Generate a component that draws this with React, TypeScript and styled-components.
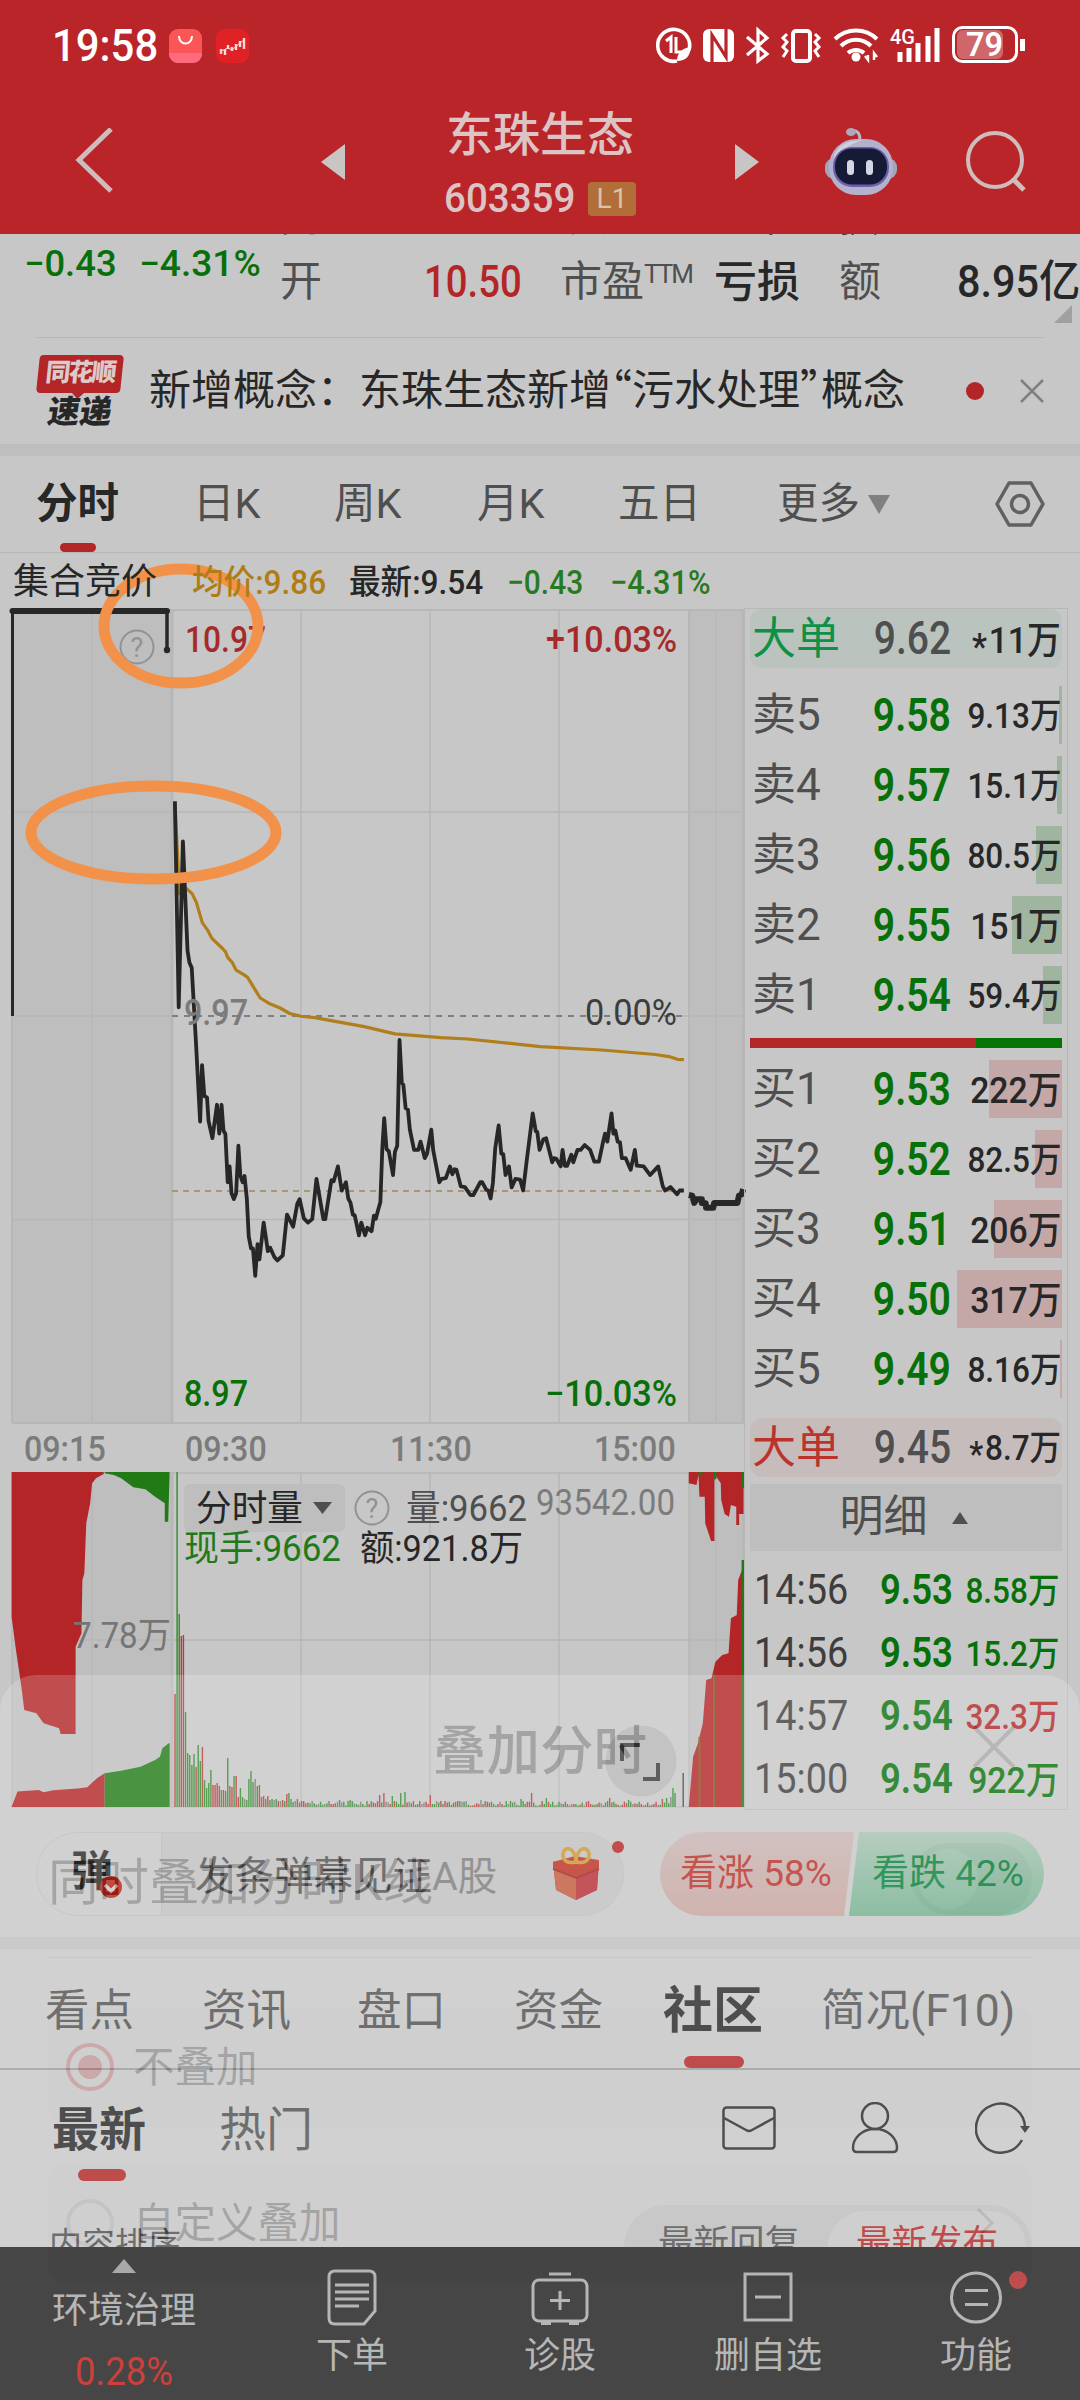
import React from "react";
import styled, { createGlobalStyle } from "styled-components";

const FONT = `Roboto, "Noto Sans CJK SC", sans-serif`;
const INK = "#272727";
const GRAY = "#4f4f4f";
const MUTE = "#7b7b7b";
const RED = "#b32526";
const GREEN = "#087008";
const LINE = "#b7b7b7";

const Global = createGlobalStyle`
  body { margin: 0; background: #c7c7c7; font-family: ${FONT}; color: ${INK}; }
  * { box-sizing: border-box; }
  svg { display: block; }
`;

const Screen = styled.div`
  position: relative;
  width: 1080px;
  height: 2400px;
  overflow: hidden;
  background: #c7c7c7;
  display: flex;
  flex-direction: column;
  white-space: nowrap;
`;

/* A run of text squeezed horizontally, for the narrow numerals of the app */
const Txt = styled.span<{ $s: number; $c?: string; $w?: number; $k?: number; $o?: string }>`
  display: inline-block;
  font-size: ${(p) => p.$s}px;
  line-height: 1.2;
  color: ${(p) => p.$c || "inherit"};
  font-weight: ${(p) => p.$w || 400};
  transform: scaleX(${(p) => p.$k || 1});
  transform-origin: ${(p) => p.$o || "left"} center;
`;

/* ---------- header ---------- */
const Header = styled.header`
  height: 234px;
  flex: none;
  background: #ba252a;
  color: #fff;
`;
const StatusBar = styled.div`
  height: 90px;
  padding: 2px 53px 0 52px;
  display: flex;
  align-items: center;
  justify-content: space-between;
`;
const StatusLeft = styled.div`
  display: flex;
  align-items: center;
  gap: 14px;
`;
const Clock = styled.div`
  width: 103px;
`;
const TitleBar = styled.div`
  height: 144px;
  display: grid;
  grid-template-columns: 310px 460px 310px;
  align-items: center;
`;
const TitleSide = styled.div<{ $pad: string; $gap?: number }>`
  display: flex;
  align-items: center;
  gap: ${(p) => p.$gap || 0}px;
  padding: ${(p) => p.$pad};
`;
const TitleMid = styled.div`
  display: flex;
  align-items: center;
  justify-content: space-between;
  padding: 0 11px;
`;
const TitleText = styled.div`
  display: flex;
  flex-direction: column;
  align-items: center;
  color: #dcc4c5;
  gap: 17px;
  margin-top: 3px;
`;
const Name = styled.div`
  font-size: 47px;
  font-weight: 500;
  line-height: 54px;
`;
const CodeLine = styled.div`
  display: flex;
  align-items: center;
  height: 40px;
  width: 192px;
  justify-content: space-between;
`;
const CodeNum = styled.div`
  width: 138px;
`;
const Level = styled.div`
  width: 48px;
  height: 34px;
  border-radius: 4px;
  background: #b26e38;
  color: #d9c3ab;
  font-size: 28px;
  line-height: 34px;
  text-align: center;
`;

/* ---------- quote strip ---------- */
const Quote = styled.section`
  height: 103px;
  flex: none;
  position: relative;
  overflow: hidden;
`;
const QuoteGrid = styled.div`
  display: grid;
  grid-template-columns: 254px 144px 136px 154px 125px 118px auto;
  padding-left: 26px;
  height: 97px;
  align-items: center;
`;
const PrevRow = styled(QuoteGrid)`
  position: absolute;
  left: 0;
  top: -38px;
  height: 44px;
  font-size: 40px;
  line-height: 44px;
`;
const PrevValue = styled.span`
  padding-left: 48px;
`;
const Cell = styled.div<{ $up?: number }>`
  display: flex;
  gap: 23px;
  margin-left: -2px;
  margin-top: ${(p) => -(p.$up || 0)}px;
`;
const Sup = styled.sup`
  font-size: 26px;
  vertical-align: 13px;
  line-height: 0;
  letter-spacing: -2px;
`;
const Corner = styled.div`
  position: absolute;
  right: 8px;
  bottom: 14px;
  border-left: 18px solid transparent;
  border-bottom: 18px solid #a0a0a0;
`;

/* ---------- news ---------- */
const News = styled.section`
  margin: 0 36px;
  height: 107px;
  flex: none;
  border-top: 1px solid ${LINE};
  display: flex;
  align-items: center;
`;
const Brand = styled.div`
  width: 88px;
  margin-right: 25px;
  display: flex;
  flex-direction: column;
  align-items: center;
  gap: 3px;
`;
const BrandTop = styled.div`
  position: relative;
  width: 84px;
  height: 38px;
  background: ${RED};
  border-radius: 4px;
  transform: skewX(-6deg);
  color: #dcc9c9;
  font: 900 25px/36px ${FONT};
  text-align: center;
  letter-spacing: -2px;
  &::after {
    content: "";
    position: absolute;
    left: 36px;
    bottom: -6px;
    border: 6px solid transparent;
    border-bottom: 0;
    border-top-color: ${RED};
  }
`;
const BrandBottom = styled.div`
  font: 900 32px/32px ${FONT};
  transform: skewX(-9deg);
`;
const NewsText = styled.div`
  flex: 1;
  font-size: 42px;
  line-height: 50px;
  margin-top: -5px;
`;
const Q = styled.span`
  font-family: "Noto Sans CJK SC", sans-serif;
  font-feature-settings: "halt";
`;
const Dot = styled.div<{ $d: number }>`
  width: ${(p) => p.$d}px;
  height: ${(p) => p.$d}px;
  border-radius: 50%;
  background: ${RED};
`;
const CloseIcon = styled.svg`
  margin-left: 36px;
`;
const Band = styled.div`
  height: 12px;
  flex: none;
  background: #bebebe;
`;

/* ---------- tabs ---------- */
const Tabs = styled.nav`
  height: 97px;
  flex: none;
  border-bottom: 1px solid ${LINE};
  display: grid;
  grid-template-columns: 157px 141px 143px 141px 159px 217px 1fr;
  padding-left: 36px;
  color: ${GRAY};
  font-size: 41.5px;
`;
const Tab = styled.div<{ $on?: boolean }>`
  position: relative;
  height: 96px;
  line-height: 98px;
  color: ${(p) => (p.$on ? INK : GRAY)};
  font-weight: ${(p) => (p.$on ? 700 : 400)};
  display: flex;
  align-items: center;
  gap: 8px;
`;
const Underline = styled.i<{ $l: number; $w: number; $b?: number; $h: number }>`
  position: absolute;
  left: ${(p) => p.$l}px;
  bottom: ${(p) => p.$b || 0}px;
  width: ${(p) => p.$w}px;
  height: ${(p) => p.$h}px;
  border-radius: 6px;
  background: ${RED};
`;
const Caret = styled.i<{ $w: number; $h: number; $c: string; $up?: boolean }>`
  border: ${(p) => p.$w / 2}px solid transparent;
  ${(p) => (p.$up ? "border-top: 0;" : "border-bottom: 0;")}
  ${(p) => (p.$up ? "border-bottom" : "border-top")}: ${(p) => p.$h}px solid ${(p) => p.$c};
`;

/* ---------- market area ---------- */
const Market = styled.section`
  flex: none;
  height: 1255px;
  display: grid;
  grid-template-columns: 744px 324px;
`;
const ChartCol = styled.div`
  display: flex;
  flex-direction: column;
`;
const Info = styled.div`
  height: 56px;
  padding: 3px 0 0 13px;
  display: grid;
  grid-template-columns: 179px 157px 158px 103px auto;
  align-items: center;
  font-weight: 500;
`;
const Axis = styled.div`
  height: 49px;
  padding: 5px 0 0 24px;
  display: grid;
  grid-template-columns: 161px 205px 204px auto;
  align-items: center;
`;
const Panel = styled.aside`
  margin-top: 55px;
  border: 1px solid ${LINE};
  padding: 0 5px;
  display: flex;
  flex-direction: column;
`;
const BookRow = styled.div<{ $h: number; $bg?: string; $mt?: number }>`
  position: relative;
  height: ${(p) => p.$h}px;
  margin-top: ${(p) => p.$mt || 0}px;
  background: ${(p) => p.$bg || "none"};
  border-radius: ${(p) => (p.$bg ? 12 : 0)}px;
  display: grid;
  grid-template-columns: 100px 99px 1fr;
  align-items: center;
  padding: 1px 1px 0 2px;
  flex: none;
`;
const DepthBar = styled.i<{ $w: number; $c: string }>`
  position: absolute;
  right: 0;
  top: 0;
  width: ${(p) => p.$w}px;
  height: 58px;
  background: ${(p) => p.$c};
`;
const Right = styled.div<{ $dy?: number }>`
  position: relative;
  display: flex;
  justify-content: flex-end;
  margin-top: ${(p) => p.$dy || 0}px;
`;
const Star = styled.span`
  font-size: 1em;
  position: relative;
  top: 0.18em;
  margin-right: 2px;
`;
const Ratio = styled.div`
  margin-top: 14px;
  height: 10px;
  flex: none;
  background: linear-gradient(90deg, ${RED} 0 226.5px, #047404 226.5px);
`;
const DetailHead = styled.div`
  margin: 7px 0 6px;
  height: 67px;
  flex: none;
  background: #bebebe;
  color: ${GRAY};
  display: flex;
  align-items: center;
  justify-content: center;
  gap: 24px;
  font-size: 44px;
  line-height: 67px;
  padding-right: 5px;
`;
const TradeRow = styled.div`
  height: 63px;
  flex: none;
  display: grid;
  grid-template-columns: 100px 99px 1fr;
  align-items: center;
  padding: 4px 3px 0 4px;
`;

/* ---------- bullet bar ---------- */
const Bullet = styled.section`
  flex: none;
  height: 129px;
  padding: 24px 36px 0;
  display: flex;
  gap: 36px;
`;
const Input = styled.div`
  position: relative;
  width: 588px;
  height: 84px;
  border: 1px solid #bbb;
  border-radius: 42px;
  background: linear-gradient(90deg, #c7c7c7 0 124px, #b8b8b8 124px 125px, #bfbfbf 125px);
  display: flex;
  align-items: center;
  padding-right: 22px;
`;
const BulletMark = styled.div`
  position: relative;
  width: 124px;
  padding-left: 34px;
  font-size: 42px;
  font-weight: 700;
  line-height: 76px;
  margin-top: -4px;
`;
const MarkBadge = styled.svg`
  position: absolute;
  left: 63px;
  top: 42px;
`;
const Placeholder = styled.div`
  flex: 1;
  padding-left: 34px;
  margin-top: -4px;
  font-size: 39.5px;
  color: ${MUTE};
`;
const Strong = styled.span`
  color: #505050;
`;
const GiftDot = styled.div`
  position: absolute;
  right: -1px;
  top: 8px;
`;
const Vote = styled.div`
  width: 384px;
  height: 84px;
  display: flex;
`;
const VoteHalf = styled.div<{ $g?: boolean }>`
  width: ${(p) => (p.$g ? 195 : 194)}px;
  margin-left: ${(p) => (p.$g ? -5 : 0)}px;
  flex: none;
  border-radius: ${(p) => (p.$g ? "0 42px 42px 0" : "42px 0 0 42px")};
  clip-path: ${(p) => (p.$g ? "polygon(10px 0,100% 0,100% 100%,0 100%)" : "polygon(0 0,100% 0,184px 100%,0 100%)")};
  background: ${(p) => (p.$g ? "linear-gradient(#a6c1b0,#71af8d)" : "linear-gradient(#c6b4b2,#c5a29c)")};
  color: ${(p) => (p.$g ? "#047f38" : "#b82d26")};
  font-size: 37px;
  line-height: 83px;
  padding-left: ${(p) => (p.$g ? 23 : 20)}px;
`;

/* ---------- community ---------- */
const SubTabs = styled.nav`
  flex: none;
  height: 121px;
  border-bottom: 2px solid #9b9b9b;
  padding-left: 45px;
  display: grid;
  grid-template-columns: 157px 155px 157px 149px 158px 1fr;
  color: ${GRAY};
  font-size: 44.5px;
`;
const SubTab = styled.div<{ $on?: boolean }>`
  position: relative;
  height: 119px;
  line-height: 124px;
  color: ${(p) => (p.$on ? INK : GRAY)};
  font-size: ${(p) => (p.$on ? 50 : 44.5)}px;
  font-weight: ${(p) => (p.$on ? 700 : 400)};
`;
const FeedHead = styled.div`
  flex: none;
  height: 116px;
  display: grid;
  grid-template-columns: 167px 503px 129px 124px auto;
  padding-left: 52px;
  align-items: center;
`;
const FeedTab = styled.div<{ $on?: boolean }>`
  position: relative;
  height: 116px;
  line-height: 119px;
  font-size: 47px;
  font-weight: ${(p) => (p.$on ? 700 : 400)};
  color: ${(p) => (p.$on ? INK : GRAY)};
`;
const SortRow = styled.div`
  flex: none;
  height: 61px;
  overflow: hidden;
  padding: 19px 48px 0 49px;
  display: flex;
  justify-content: space-between;
  font-size: 33px;
  color: ${GRAY};
`;
const SortLabel = styled.div`
  padding-top: 13px;
`;
const SortPill = styled.div`
  width: 408px;
  height: 84px;
  border-radius: 42px;
  background: #bebebe;
  padding: 6px;
  display: flex;
  font-size: 35.5px;
`;
const SortOpt = styled.div<{ $on?: boolean }>`
  width: 198px;
  line-height: 64px;
  height: 72px;
  text-align: center;
  border-radius: 36px;
  background: ${(p) => (p.$on ? "#c7c7c7" : "none")};
  color: ${(p) => (p.$on ? RED : GRAY)};
`;

/* ---------- bottom bar ---------- */
const Nav = styled.footer`
  flex: none;
  height: 153px;
  background: #1c1c1c;
  color: #a6a6a6;
  display: grid;
  grid-template-columns: 248px repeat(4, 208px);
  font-size: 36px;
`;
const NavItem = styled.div<{ $first?: boolean }>`
  position: relative;
  display: flex;
  flex-direction: column;
  align-items: center;
  padding-top: ${(p) => (p.$first ? 12 : 21)}px;
  line-height: 44px;
`;
const NavLabel = styled.div<{ $mt: number; $c?: string }>`
  margin-top: ${(p) => p.$mt}px;
  color: ${(p) => p.$c || "inherit"};
`;
const NavDot = styled.div`
  position: absolute;
  left: 137px;
  top: 24px;
`;

/* ---------- fading sheet ---------- */
const Sheet = styled.div`
  position: absolute;
  left: 0;
  right: 0;
  top: 1675px;
  bottom: 0;
  border-radius: 36px 36px 0 0;
  background: #fff;
  opacity: 0.19;
  color: #101010;
  display: flex;
  flex-direction: column;
  padding: 0 48px;
`;
const SheetHead = styled.div`
  position: relative;
  height: 140px;
  padding-top: 2px;
  display: flex;
  justify-content: center;
  align-items: center;
  font-size: 53.5px;
  font-weight: 500;
`;
const SheetClose = styled.div`
  position: absolute;
  right: 16px;
  top: 51px;
`;
const SwitchRow = styled.div`
  height: 143px;
  border-bottom: 1px solid #ccc;
  padding-bottom: 16px;
  display: flex;
  align-items: center;
  justify-content: space-between;
  font-size: 50.5px;
`;
const Switch = styled.div`
  width: 120px;
  height: 72px;
  margin-top: 2px;
  border-radius: 36px;
  background: #dcdcdc;
  padding: 6px;
`;
const Knob = styled.div`
  width: 60px;
  height: 60px;
  border-radius: 50%;
  background: #fff;
`;
const Option = styled.div<{ $mt: number }>`
  margin-top: ${(p) => p.$mt}px;
  height: 120px;
  border-radius: 18px;
  background: #f5f5f5;
  padding: 0 38px 0 18px;
  display: flex;
  align-items: center;
  gap: 19px;
  font-size: 41.5px;
`;
const OptionText = styled.div`
  flex: 1;
  margin-top: -6px;
`;
const Radio = styled.div<{ $on?: boolean }>`
  width: 48px;
  height: 48px;
  border-radius: 50%;
  border: 4px solid ${(p) => (p.$on ? "#e0262b" : "#bbb")};
  display: grid;
  place-items: center;
  &::after {
    content: "";
    width: 24px;
    height: 24px;
    border-radius: 50%;
    background: ${(p) => (p.$on ? "#e0262b" : "transparent")};
  }
`;

/* ---------- chart data ---------- */
const PRICE =
  "65,62 75,660 86,178 98,495 103,530 109,545 120,760 131,992 136,828 142,918 149,922 153,990 163,1040 175,943 181,1027 187,943 192,1018 197,1028 203,1168 208,1122 213,1200 219,1217 225,1200 231,1062 236,1148 242,1168 247,1150 253,1215 258,1325 264,1360 269,1360 275,1440 281,1348 286,1392 297,1285 308,1368 314,1358 325,1385 333,1395 347,1380 358,1262 374,1297 385,1230 391,1217 402,1273 413,1285 424,1275 435,1158 453,1275 458,1275 474,1162 480,1165 491,1122 501,1192 512,1168 518,1215 524,1228 530,1262 535,1264 546,1322 552,1285 562,1322 568,1300 579,1310 585,1265 590,1274 597,1245 602,1225 607,1070 612,982 618,1072 624,1078 635,1147 640,1080 646,1062 652,755 658,880 662,885 668,953 674,957 679,1015 690,1074 701,1074 707,1050 718,1098 724,1085 735,1015 740,1075 756,1168 762,1158 773,1156 784,1122 790,1145 796,1130 801,1132 812,1180 823,1182 837,1205 845,1205 863,1168 868,1168 879,1190 884,1192 890,1215 896,1170 902,1070 911,1003 918,1085 923,1086 929,1147 938,1122 945,1183 955,1158 967,1160 975,1192 985,1100 1000,968 1008,1020 1012,1022 1018,1074 1028,1043 1035,1040 1051,1110 1056,1098 1062,1100 1073,1122 1078,1074 1084,1120 1090,1120 1101,1088 1106,1110 1117,1074 1125,1074 1136,1060 1150,1074 1161,1108 1173,1108 1184,1050 1189,1027 1195,1050 1206,968 1211,1027 1216,1018 1222,1050 1228,1052 1233,1098 1243,1098 1256,1132 1267,1074 1272,1120 1290,1122 1307,1147 1328,1122 1340,1180 1346,1192 1360,1182 1377,1203 1384,1192 1395,1192";
const AVERAGE =
  "65,62 72,220 77,330 95,315 110,330 121,355 137,415 150,435 162,460 190,490 197,498 203,515 215,530 225,552 245,565 255,573 288,633 310,648 340,662 365,678 395,686 430,690 560,716 640,737 760,748 830,752 1020,774 1180,784 1320,797 1360,804 1378,811 1395,812";
const CLOSE_AUCTION =
  "1408,1205 1417,1207 1422,1228 1428,1217 1442,1217 1442,1228 1452,1229 1453,1242 1472,1242 1474,1228 1535,1228 1539,1207 1546,1203 1550,1188";

/* [height in px, colour] for the opening minutes */
const OPENING: [number, string][] = [
  [113, "r"], [335, "g"], [193, "g"], [171, "r"], [172, "r"], [95, "g"], [54, "g"], [52, "g"], [42, "g"], [53, "g"],
  [40, "r"], [62, "g"], [46, "g"], [60, "r"], [27, "g"], [19, "g"], [24, "g"], [37, "g"], [22, "r"], [22, "r"],
  [24, "r"], [21, "r"], [17, "g"], [17, "r"], [16, "g"], [49, "g"], [21, "r"], [20, "r"], [31, "g"], [31, "r"],
  [10, "r"], [19, "g"], [10, "g"], [8, "k"], [7, "g"], [28, "g"], [36, "g"], [25, "g"], [28, "k"], [21, "g"],
  [22, "r"], [10, "r"], [11, "r"], [8, "g"], [11, "r"], [7, "g"], [8, "g"], [7, "k"], [8, "g"], [6, "r"],
  [6, "k"], [7, "r"], [6, "g"], [13, "r"], [14, "g"], [8, "g"], [5, "g"], [6, "k"], [8, "r"],
];
const PEAKS: Record<number, [number, string]> = {
  78: [7, "g"], 83: [7, "g"], 97: [12, "r"], 99: [14, "r"], 103: [11, "g"], 107: [14, "g"], 109: [15, "g"],
  121: [12, "r"], 145: [7, "k"], 164: [8, "g"], 169: [14, "r"], 176: [9, "g"], 206: [9, "r"], 215: [7, "g"],
  231: [8, "r"], 233: [9, "g"], 235: [10, "k"], 236: [19, "g"], 237: [14, "g"],
};
const TONE: Record<string, string> = { r: "#b5383a", g: "#2f8a2a", k: "#777" };
const BARS = Array.from({ length: 238 }, (_, i): [number, string] => {
  if (i < OPENING.length) return OPENING[i];
  if (PEAKS[i]) return PEAKS[i];
  const n = (i * 7919 + ((i * i) % 31) * 37) % 101;
  return [1.5 + (n % 7) * 0.75, n % 5 < 2 ? "g" : n % 5 < 4 ? "r" : "k"];
});

type LabelProps = { x: number; y: number; w: number; c: string; s?: number; b?: number; children: React.ReactNode };
const Label = ({ x, y, w, c, s = 36, b = 400, children }: LabelProps) => (
  <text x={x} y={y} fontSize={s} fill={c} fontWeight={b} fontFamily={FONT} textLength={w} lengthAdjust="spacingAndGlyphs">
    {children}
  </text>
);

const Help = ({ x, y }: { x: number; y: number }) => (
  <g>
    <circle cx={x} cy={y} r={16.5} fill="none" stroke="#929292" strokeWidth={2} />
    <text x={x} y={y + 9.5} fontSize={27} fill="#929292" textAnchor="middle" fontFamily={FONT}>?</text>
  </g>
);

const VLINES = [92, 301, 430, 559, 716];

const PriceChart = () => (
  <svg width="744" height="814" viewBox="0 609 744 814" overflow="visible">
    <rect x="12" y="610" width="160" height="813" fill="#bebebe" />
    <rect x="689" y="610" width="55" height="813" fill="#bebebe" />
    <g stroke={LINE} strokeWidth="1.5">
      {VLINES.map((x) => <path key={x} d={`M${x} 610V1423`} />)}
      <path d="M12 812H744M12 1016H172M682 1016H744M12 1219.5H744" />
      <path d="M12 610H744M12 1423H744M12 610V1423M689 610V1423M743 610V1423" strokeWidth="2" />
      <path d="M172 610V1423" strokeWidth="3" />
    </g>
    <path d="M172 1016H684" stroke="#808080" strokeWidth="2" strokeDasharray="6 6" />
    <path d="M172 1191H684" stroke="#a08658" strokeWidth="1.6" strokeDasharray="6 5" />
    <g fill="none" strokeLinejoin="round" transform="translate(150 780) scale(.3827 .3444)">
      <polyline points={AVERAGE} stroke="#b07f1c" strokeWidth="3.2" vectorEffect="non-scaling-stroke" />
      <polyline points={PRICE} stroke={INK} strokeWidth="3.8" vectorEffect="non-scaling-stroke" />
      <polyline points={CLOSE_AUCTION} stroke={INK} strokeWidth="6" vectorEffect="non-scaling-stroke" />
    </g>
    <path d="M12.5 611V1016" stroke={INK} strokeWidth="3" />
    <path d="M12.5 611H167" stroke={INK} strokeWidth="6" strokeLinecap="round" />
    <path d="M167 612V650" stroke={INK} strokeWidth="3.5" strokeLinecap="round" />
    <circle cx="167" cy="650" r="3.2" fill={INK} />
    <Help x={137} y={647} />
    <Label x={185} y={652} w={81} c="#a52a2a" b={500}>10.97</Label>
    <Label x={546} y={652} w={131} c="#a52a2a" b={500}>+10.03%</Label>
    <Label x={184} y={1025} w={64} c="#7b7b7b" b={500}>9.97</Label>
    <Label x={585} y={1025} w={92} c="#3d3d3d">0.00%</Label>
    <Label x={184} y={1406} w={64} c={GREEN} b={500}>8.97</Label>
    <Label x={545} y={1406} w={132} c={GREEN} b={500}>−10.03%</Label>
    <g fill="none" stroke="#f2924a" strokeWidth="11">
      <ellipse cx="181" cy="626" rx="77" ry="57" />
      <ellipse cx="153.5" cy="832.5" rx="122.5" ry="46.5" />
    </g>
  </svg>
);

const VolumeChart = () => (
  <svg width="744" height="336" viewBox="0 1472 744 336">
    <rect x="12" y="1472" width="160" height="335" fill="#bebebe" />
    <rect x="689" y="1472" width="55" height="335" fill="#bebebe" />
    <g stroke={LINE} strokeWidth="1.5">
      {VLINES.map((x) => <path key={x} d={`M${x} 1472V1807`} />)}
      <path d="M12 1640H744M172 1473H689M12 1472V1807M689 1472V1807M743 1472V1807M12 1807H744" />
      <path d="M172 1472V1807" strokeWidth="3" />
    </g>
    <g transform="translate(0 1360) scale(.4847 .3333)" fill="#b32526">
      <path d="M24 336H214V342L198 355 190 370 186 430 178 490 174 640 170 660 168 820 156 860V1122H125L122 1105 90 1090 75 1060 50 1050 45 990 38 920 32 860 24 770Z" />
      <path d="M24 1341L36 1295 80 1290 90 1297 110 1291 160 1286 180 1282 200 1255 216 1240V1341Z" />
      <path d="M1421 336H1534V462H1525V495H1519V440L1508 435 1504 470 1495 462 1488 420 1487 370 1478 350 1474 355V543H1467L1455 490 1454 410H1443L1441 345 1437 375 1421 370Z" />
      <path d="M1421 1341L1430 1190 1440 1150 1450 1090 1457 960 1468 955 1476 905 1490 885 1503 880 1508 775 1520 765 1523 660 1531 630V1341Z" />
      <g fill="#217a16">
        <path d="M216 336H350L347 485H340V430L320 410 300 388 275 382 250 355 235 345 216 340Z" />
        <path d="M216 1341V1240L250 1232 290 1220 320 1200 330 1190 335 1165 348 1150H350V1341Z" />
        <path d="M1530 600H1535V1341H1530ZM1530 336H1535V385H1530ZM1472 336H1478V358H1472ZM1441 336H1449V344H1441Z" />
      </g>
      <path d="M1441 1130H1445V1341H1441ZM1471 940H1475V1341H1471Z" fill="#7d5a20" />
    </g>
    {BARS.map(([h, t], i) => (
      <rect key={i} x={174.3 + i * 2.11} y={1807 - h} width={1.4} height={h} fill={TONE[t]} />
    ))}
    <rect x="682.5" y="1773" width="1.4" height="34" fill="#444" />
    <rect x="184" y="1484" width="161" height="48" rx="6" fill="#bebebe" />
    <Label x={196} y={1521} w={107} c={INK}>分时量</Label>
    <path d="M313 1502H332L322.5 1514Z" fill={GRAY} />
    <Help x={372} y={1508} />
    <Label x={406} y={1521} w={121} c={GRAY}>量:9662</Label>
    <Label x={536} y={1515} w={139} c={MUTE}>93542.00</Label>
    <Label x={184} y={1561} w={157} c="#1f7a19">现手:9662</Label>
    <Label x={360} y={1561} w={163} c={INK}>额:921.8万</Label>
    <Label x={73} y={1648} w={98} c="#767676">7.78万</Label>
    <circle cx="641" cy="1761" r="35.5" fill="#000" fillOpacity=".09" />
    <path d="M622 1761V1745H640M643 1779H658V1763" fill="none" stroke="#383838" strokeWidth="4" />
  </svg>
);

/* ---------- icons ---------- */
const StatusIcons = () => (
  <svg width="372" height="44" viewBox="654 24 372 44" fill="none" stroke="#fff" strokeWidth="3.6">
    <path d="M688 50A16 16 0 1 0 676 61" />
    <path d="M665 41L670 37V53M675 37V52H681" strokeWidth="3" />
    <path d="M676 61C676 52 682 48 690 47C689 56 685 61 676 61Z" fill="#fff" stroke="none" />
    <rect x="702" y="29" width="31" height="33" rx="6" fill="#fff" stroke="none" />
    <path d="M711 62V35L725 57V29" stroke="#ba252a" strokeWidth="3.2" />
    <path d="M746 37L766 54L757 61V30L766 38L746 55" strokeWidth="3.2" />
    <rect x="792" y="31" width="17" height="30" rx="3" strokeWidth="4" />
    <path d="M786 34L782 38L786 42L782 47L786 51L782 57M814 34L818 38L814 42L818 47L814 51L818 57" strokeWidth="3" />
    <path d="M834 39A30 30 0 0 1 876 39M840 46A21 21 0 0 1 870 46M847 53A12 12 0 0 1 863 53" strokeWidth="4" />
    <circle cx="855" cy="57" r="4.5" fill="#fff" stroke="none" />
    <path d="M867 55V60L864 56M873 60V53L876 57" strokeWidth="2.4" />
    <text x="889" y="44" fontSize="21" fill="#fff" stroke="none" fontWeight="500" fontFamily={FONT} textLength="25" lengthAdjust="spacingAndGlyphs">4G</text>
    <path d="M899 62V52M908 62V48M917 62V43M927 62V36M936 62V28" strokeWidth="5" />
    <rect x="952.5" y="27.5" width="63" height="34" rx="9" strokeWidth="3" />
    <rect x="956" y="30" width="46" height="29" rx="6" fill="#cf6669" stroke="none" />
    <path d="M1021.5 39V51" strokeWidth="5" />
    <text x="965" y="56" fontSize="33" fill="#fff" stroke="none" fontWeight="600" fontFamily={FONT} textLength="37" lengthAdjust="spacingAndGlyphs">79</text>
  </svg>
);

const ShopIcon = () => (
  <svg width="33" height="34" viewBox="0 0 33 34">
    <rect width="33" height="34" rx="9" fill="#fa5557" />
    <path d="M0 24H33V25A9 9 0 0 1 24 34H9A9 9 0 0 1 0 25Z" fill="#ff6a7c" />
    <path d="M10 7C10 17 23 17 23 7" stroke="#fff" strokeWidth="2" fill="none" />
  </svg>
);
const StockIcon = () => (
  <svg width="33" height="34" viewBox="0 0 33 34">
    <rect width="33" height="34" rx="9" fill="#e02226" />
    <path d="M5 20V25M9 20V26M12 16V20M16 18V22M20 15V21M24 12V18M28 9V20" stroke="#ffd9d9" strokeWidth="2.4" />
    <path d="M5 22L12 19L16 21L24 14L28 11" stroke="#ffd9d9" strokeWidth="1" fill="none" />
  </svg>
);
const Robot = () => (
  <svg width="74" height="70" viewBox="0 0 74 70">
    <path d="M36 13C36 6 33 3 28 4" stroke="#b9b7c9" strokeWidth="3" fill="none" />
    <ellipse cx="27" cy="5" rx="5" ry="4" fill="#aaa9bd" />
    <rect x="1" y="31" width="72" height="21" rx="9" fill="#a3a4bd" />
    <rect x="5" y="12" width="64" height="56" rx="27" fill="#b3b1cb" />
    <path d="M10 28C16 16 26 13 40 13C26 16 16 24 12 36Z" fill="#d0d0da" />
    <rect x="9" y="20" width="56" height="40" rx="19" fill="#6a5fae" />
    <rect x="11" y="21.5" width="52" height="36" rx="17" fill="#161b35" />
    <rect x="23" y="33" width="7" height="15" rx="3.5" fill="#d3d8e2" />
    <rect x="42" y="33" width="7" height="15" rx="3.5" fill="#d3d8e2" />
  </svg>
);
const Gift = () => (
  <svg width="50" height="54" viewBox="0 0 50 54">
    <path d="M2 15L24 9L48 13L46 43L25 53L5 43Z" fill="#c03c28" />
    <path d="M2 15L25 22V53L5 43Z" fill="#c0583a" />
    <path d="M25 22L48 15L46 43L25 53Z" fill="#b82c34" />
    <path d="M2 15L24 10L48 14V22L25 31L2 22Z" fill="#bb2e22" />
    <path d="M2 22L25 31L48 22" fill="none" stroke="#93241c" strokeWidth="1.5" />
    <path d="M25 15C10 18 9 4 16 1.5C22 1 25 9 25 15C25 9 28 1 34 1.5C41 4 40 18 25 15Z" fill="none" stroke="#c9952e" strokeWidth="3.5" />
  </svg>
);

const SELLS: [string, string, string, number][] = [
  ["卖5", "9.58", "9.13万", 3], ["卖4", "9.57", "15.1万", 5], ["卖3", "9.56", "80.5万", 26], ["卖2", "9.55", "151万", 50], ["卖1", "9.54", "59.4万", 19],
];
const BUYS: [string, string, string, number][] = [
  ["买1", "9.53", "222万", 73], ["买2", "9.52", "82.5万", 27], ["买3", "9.51", "206万", 68], ["买4", "9.50", "317万", 105], ["买5", "9.49", "8.16万", 2],
];
const TRADES: [string, string, string, string][] = [
  ["14:56", "9.53", "8.58万", GREEN], ["14:56", "9.53", "15.2万", GREEN], ["14:57", "9.54", "32.3万", RED], ["15:00", "9.54", "922万", GREEN],
];

/* Amounts without a decimal point are set a little larger */
const Amount = ({ v, c }: { v: string; c?: string }) => {
  const star = v[0] === "*";
  const size = v.includes(".") ? 35 : 37.5;
  return (
    <Txt $s={size} $c={c} $w={500} $k={0.9} $o="right">
      {star ? <Star>*</Star> : null}
      {star ? v.slice(1) : v}
    </Txt>
  );
};

type BookProps = { row: string[]; h: number; mt?: number; bg?: string; lc?: string; pc: string; pw?: number; bar?: number; barColor?: string };
const BookLine = ({ row, h, mt, bg, lc = GRAY, pc, pw = 500, bar, barColor = "" }: BookProps) => (
  <BookRow $h={h} $mt={mt} $bg={bg}>
    {bar ? <DepthBar $w={bar} $c={barColor} /> : null}
    <Txt $s={44} $c={lc}>{row[0]}</Txt>
    <Right><Txt $s={46} $c={pc} $w={pw} $k={0.85} $o="right">{row[1]}</Txt></Right>
    <Right $dy={2}><Amount v={row[2]} /></Right>
  </BookRow>
);

export default function App() {
  return (
    <Screen>
      <Global />
      <Header>
        <StatusBar>
          <StatusLeft>
            <Clock><Txt $s={45} $w={500} $k={0.93}>19:58</Txt></Clock>
            <ShopIcon />
            <StockIcon />
          </StatusLeft>
          <StatusIcons />
        </StatusBar>
        <TitleBar>
          <TitleSide $pad="0 0 0 74px">
            <svg width="40" height="68" viewBox="0 0 40 68"><path d="M37 1L5 32L37 63" fill="none" stroke="#cdbdbd" strokeWidth="5" /></svg>
          </TitleSide>
          <TitleMid>
            <svg width="24" height="36" viewBox="0 0 24 36"><path d="M24 0V36L0 18Z" fill="#c9c5c5" /></svg>
            <TitleText>
              <Name>东珠生态</Name>
              <CodeLine>
                <CodeNum><Txt $s={41} $w={500} $k={0.94}>603359</Txt></CodeNum>
                <Level>L1</Level>
              </CodeLine>
            </TitleText>
            <svg width="24" height="36" viewBox="0 0 24 36"><path d="M0 0V36L24 18Z" fill="#c9c5c5" /></svg>
          </TitleMid>
          <TitleSide $pad="0 0 0 54px" $gap={67}>
            <Robot />
            <svg width="64" height="64" viewBox="0 0 64 64" fill="none" stroke="#cdbdbd" strokeWidth="4">
              <circle cx="30" cy="30" r="27" />
              <path d="M48 49L59 60" strokeWidth="5" />
            </svg>
          </TitleSide>
        </TitleBar>
      </Header>

      <Quote>
        <PrevRow>
          <span /><span>高</span><span /><span>流通</span><PrevValue>亿</PrevValue><span>换</span><span />
        </PrevRow>
        <QuoteGrid>
          <Cell $up={36}>
            <Txt $s={36} $c={GREEN} $w={500} $k={1.01}>−0.43</Txt>
            <Txt $s={36} $c={GREEN} $w={500} $k={1.03}>−4.31%</Txt>
          </Cell>
          <Txt $s={42} $c={GRAY}>开</Txt>
          <Txt $s={44} $c={RED} $w={500} $k={0.87}>10.50</Txt>
          <Txt $s={42} $c={GRAY}>市盈<Sup>TTM</Sup></Txt>
          <Txt $s={43} $w={500}>亏损</Txt>
          <Txt $s={42} $c={GRAY}>额</Txt>
          <Txt $s={44} $w={500} $k={0.94}>8.95亿</Txt>
        </QuoteGrid>
        <Corner />
      </Quote>

      <News>
        <Brand>
          <BrandTop>同花顺</BrandTop>
          <BrandBottom>速递</BrandBottom>
        </Brand>
        <NewsText>新增概念：东珠生态新增<Q>“</Q>污水处理<Q>”</Q>概念</NewsText>
        <Dot $d={18} />
        <CloseIcon width="24" height="24" viewBox="0 0 24 24">
          <path d="M1 1L23 23M23 1L1 23" stroke="#808080" strokeWidth="2.5" />
        </CloseIcon>
      </News>
      <Band />

      <Tabs>
        <Tab $on>分时<Underline $l={24} $w={36} $h={9} /></Tab>
        <Tab>日K</Tab>
        <Tab>周K</Tab>
        <Tab>月K</Tab>
        <Tab>五日</Tab>
        <Tab>更多<Caret $w={23} $h={19} $c="#808080" /></Tab>
        <Tab>
          <svg width="52" height="48" viewBox="0 0 52 48" fill="none" stroke="#606060" strokeWidth="3.5" strokeLinejoin="round">
            <path d="M15 3H37L49 24L37 45H15L3 24Z" /><circle cx="26" cy="24" r="8.5" />
          </svg>
        </Tab>
      </Tabs>

      <Market>
        <ChartCol>
          <Info>
            <Txt $s={36}>集合竞价</Txt>
            <Txt $s={34} $c="#b07d14" $w={500} $k={0.93}>均价:9.86</Txt>
            <Txt $s={34} $w={500} $k={0.93}>最新:9.54</Txt>
            <Txt $s={34} $c="#277a22" $k={0.88} $w={500}>−0.43</Txt>
            <Txt $s={34} $c="#277a22" $k={0.9} $w={500}>−4.31%</Txt>
          </Info>
          <PriceChart />
          <Axis>
            {["09:15", "09:30", "11:30", "15:00"].map((t) => (
              <Txt key={t} $s={35} $c={MUTE} $w={500} $k={0.92}>{t}</Txt>
            ))}
          </Axis>
          <VolumeChart />
        </ChartCol>
        <Panel>
          <BookLine row={["大单", "9.62", "*11万"]} h={59} bg="#bac3be" lc="#0d9146" pc={GRAY} />
          {SELLS.map((r, i) => (
            <BookLine key={r[0]} row={[r[0], r[1], r[2]]} h={58} mt={i ? 12 : 18} pc={GREEN} pw={600} bar={r[3]} barColor="#9fb59f" />
          ))}
          <Ratio />
          {BUYS.map((r) => (
            <BookLine key={r[0]} row={[r[0], r[1], r[2]]} h={58} mt={12} pc={GREEN} pw={600} bar={r[3]} barColor="#c4a8a8" />
          ))}
          <BookLine row={["大单", "9.45", "*8.7万"]} h={59} mt={20} bg="#c7bcbc" lc="#ba332c" pc={GRAY} />
          <DetailHead>明细<Caret $w={17} $h={12} $c={GRAY} $up /></DetailHead>
          {TRADES.map((t, i) => (
            <TradeRow key={i}>
              <Txt $s={42} $c="#3d3d3d" $k={0.9}>{t[0]}</Txt>
              <Right><Txt $s={42} $c={GREEN} $w={600} $k={0.87} $o="right">{t[1]}</Txt></Right>
              <Right $dy={2}><Amount v={t[2]} c={t[3]} /></Right>
            </TradeRow>
          ))}
        </Panel>
      </Market>

      <Bullet>
        <Input>
          <BulletMark>
            弹
            <MarkBadge width="22" height="22" viewBox="0 0 22 22">
              <circle cx="11" cy="11" r="11" fill="#b32015" />
              <path d="M5 9L11 15L17 9" fill="none" stroke="#d8c4c0" strokeWidth="3.5" />
            </MarkBadge>
          </BulletMark>
          <Placeholder><Strong>发条弹幕见证</Strong>A股</Placeholder>
          <Gift />
          <GiftDot><Dot $d={12} /></GiftDot>
        </Input>
        <Vote>
          <VoteHalf>看涨 58%</VoteHalf>
          <VoteHalf $g>看跌 42%</VoteHalf>
        </Vote>
      </Bullet>
      <Band />

      <SubTabs>
        <SubTab>看点</SubTab>
        <SubTab>资讯</SubTab>
        <SubTab>盘口</SubTab>
        <SubTab>资金</SubTab>
        <SubTab $on>社区<Underline $l={21} $w={60} $h={12} /></SubTab>
        <SubTab>简况(F10)</SubTab>
      </SubTabs>

      <FeedHead>
        <FeedTab $on>最新<Underline $l={26} $w={48} $h={12} $b={5} /></FeedTab>
        <FeedTab>热门</FeedTab>
        <svg width="54" height="44" viewBox="0 0 54 44" fill="none" stroke={INK} strokeWidth="2.5">
          <rect x="1.5" y="1.5" width="51" height="41" rx="3" /><path d="M2 12L24 24Q27 26 30 24L52 12" />
        </svg>
        <svg width="48" height="52" viewBox="0 0 48 52" fill="none" stroke={INK} strokeWidth="2.5">
          <circle cx="24" cy="14" r="13" /><path d="M24 27C10 27 2 37 2 46Q2 50 6 50H42Q46 50 46 46C46 37 38 27 24 27Z" />
        </svg>
        <svg width="56" height="52" viewBox="0 0 56 52" fill="none" stroke={INK} strokeWidth="2.5">
          <path d="M47 38A24.5 24.5 0 1 1 50 27" /><path d="M45 24H55L50 31Z" fill={INK} stroke="none" />
        </svg>
      </FeedHead>
      <SortRow>
        <SortLabel>内容排序</SortLabel>
        <SortPill>
          <SortOpt>最新回复</SortOpt>
          <SortOpt $on>最新发布</SortOpt>
        </SortPill>
      </SortRow>

      <Nav>
        <NavItem $first>
          <Caret $w={25} $h={14} $c="#989898" $up />
          <NavLabel $mt={16}>环境治理</NavLabel>
          <NavLabel $mt={17} $c="#c2140f"><Txt $s={38} $k={0.96} $o="center">0.28%</Txt></NavLabel>
        </NavItem>
        <NavItem>
          <svg width="50" height="58" viewBox="0 0 50 58" fill="none" stroke="#a6a6a6" strokeWidth="3">
            <path d="M8 3H42Q48 3 48 9V43L37 56H8Q2 56 2 50V9Q2 3 8 3Z" /><path d="M8 17H42M8 24H42M8 31H42M8 38H32" />
          </svg>
          <NavLabel $mt={8}>下单</NavLabel>
        </NavItem>
        <NavItem>
          <svg width="58" height="58" viewBox="0 0 58 58" fill="none" stroke="#a6a6a6" strokeWidth="3">
            <rect x="2" y="12" width="54" height="41" rx="6" /><path d="M18 6H40M29 23V42M19 32.5H39" /><path d="M10 55H20M38 55H48" strokeWidth="4" />
          </svg>
          <NavLabel $mt={8}>诊股</NavLabel>
        </NavItem>
        <NavItem>
          <svg width="50" height="58" viewBox="0 0 50 58" fill="none" stroke="#a6a6a6" strokeWidth="3">
            <rect x="2" y="6" width="46" height="46" /><path d="M12 29H38" />
          </svg>
          <NavLabel $mt={8}>删自选</NavLabel>
        </NavItem>
        <NavItem>
          <svg width="54" height="58" viewBox="0 0 54 58" fill="none" stroke="#a6a6a6" strokeWidth="3">
            <circle cx="27" cy="29.5" r="24.5" /><path d="M16 22.5H39M16 36.5H39" />
          </svg>
          <NavLabel $mt={8}>功能</NavLabel>
          <NavDot><Dot $d={18} /></NavDot>
        </NavItem>
      </Nav>

      <Sheet>
        <SheetHead>
          叠加分时
          <SheetClose>
            <svg width="44" height="42" viewBox="0 0 44 42"><path d="M2 1L42 41M42 1L2 41" stroke="#777" strokeWidth="4" /></svg>
          </SheetClose>
        </SheetHead>
        <SwitchRow>
          <span>同时叠加分时K线</span>
          <Switch><Knob /></Switch>
        </SwitchRow>
        <Option $mt={49}><Radio $on /><OptionText>不叠加</OptionText></Option>
        <Option $mt={36}>
          <Radio /><OptionText>自定义叠加</OptionText>
          <svg width="18" height="32" viewBox="0 0 18 32" fill="none" stroke="#888" strokeWidth="3"><path d="M2 2L16 16L2 30" /></svg>
        </Option>
      </Sheet>
    </Screen>
  );
}
